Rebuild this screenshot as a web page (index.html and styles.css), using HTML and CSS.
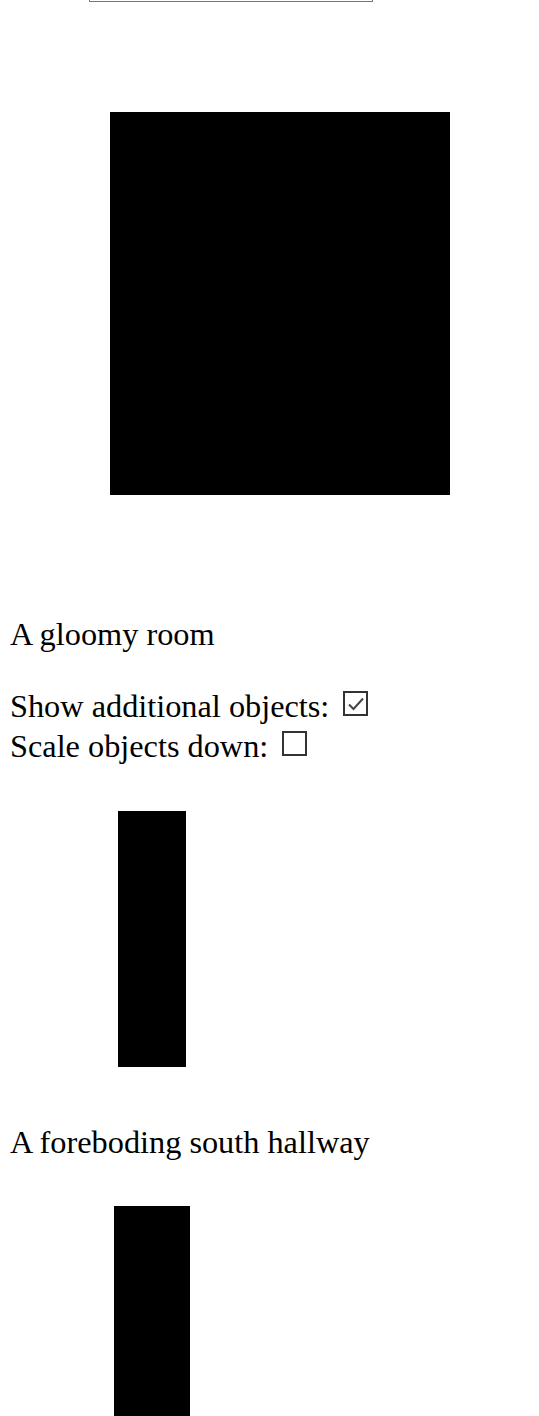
FILE: index.html
```html
<!DOCTYPE html>
<html>
<head>
<meta charset="utf-8">
<link rel="stylesheet" href="styles.css">
</head>
<body>
<div class="top-frame"></div>
<div class="room-image"></div>
<p class="caption caption-room">A gloomy room</p>
<div class="controls">
  <label class="control">Show additional objects:
    <span class="check">
      <svg width="21" height="21" viewBox="0 0 21 21"><path d="M4 11.5 L8.5 16 L18 5.5" fill="none" stroke="#444" stroke-width="2"/></svg>
    </span>
  </label>
  <label class="control">Scale objects down:
    <span class="check"></span>
  </label>
</div>
<div class="hall-image"></div>
<p class="caption caption-hall">A foreboding south hallway</p>
<div class="hall-image-2"></div>
</body>
</html>
```

FILE: styles.css
```css
html, body {
  margin: 0;
  padding: 0;
  background: #fff;
}
body {
  padding: 0 10px;
  font-family: "Liberation Serif", "Times New Roman", serif;
  font-size: 32.3px;
  color: #000;
  overflow: hidden;
  height: 1416px;
}
.top-frame {
  width: 282px;
  height: 100px;
  margin-top: -100px;
  margin-left: 79px;
  border: 1px solid #777;
}
.room-image {
  width: 340px;
  height: 383px;
  margin-top: 110px;
  margin-left: 100px;
  background: #000;
}
.caption {
  margin: 0;
  line-height: 40px;
  height: 40px;
}
.caption-room {
  margin-top: 119px;
}
.controls {
  margin-top: 32px;
  display: flex;
  flex-direction: column;
}
.control {
  display: flex;
  align-items: flex-start;
  height: 40px;
  line-height: 40px;
  white-space: nowrap;
}
.check {
  display: inline-flex;
  align-items: center;
  justify-content: center;
  box-sizing: border-box;
  width: 25px;
  height: 25px;
  border: 2px solid #333;
  margin-left: 14px;
  margin-top: 5px;
  background: #fff;
}
.check svg {
  display: block;
}
.hall-image {
  width: 68px;
  height: 256px;
  margin-top: 45px;
  margin-left: 108px;
  background: #000;
}
.caption-hall {
  margin-top: 55px;
}
.hall-image-2 {
  width: 76px;
  height: 260px;
  margin-top: 44px;
  margin-left: 104px;
  background: #000;
}
```
